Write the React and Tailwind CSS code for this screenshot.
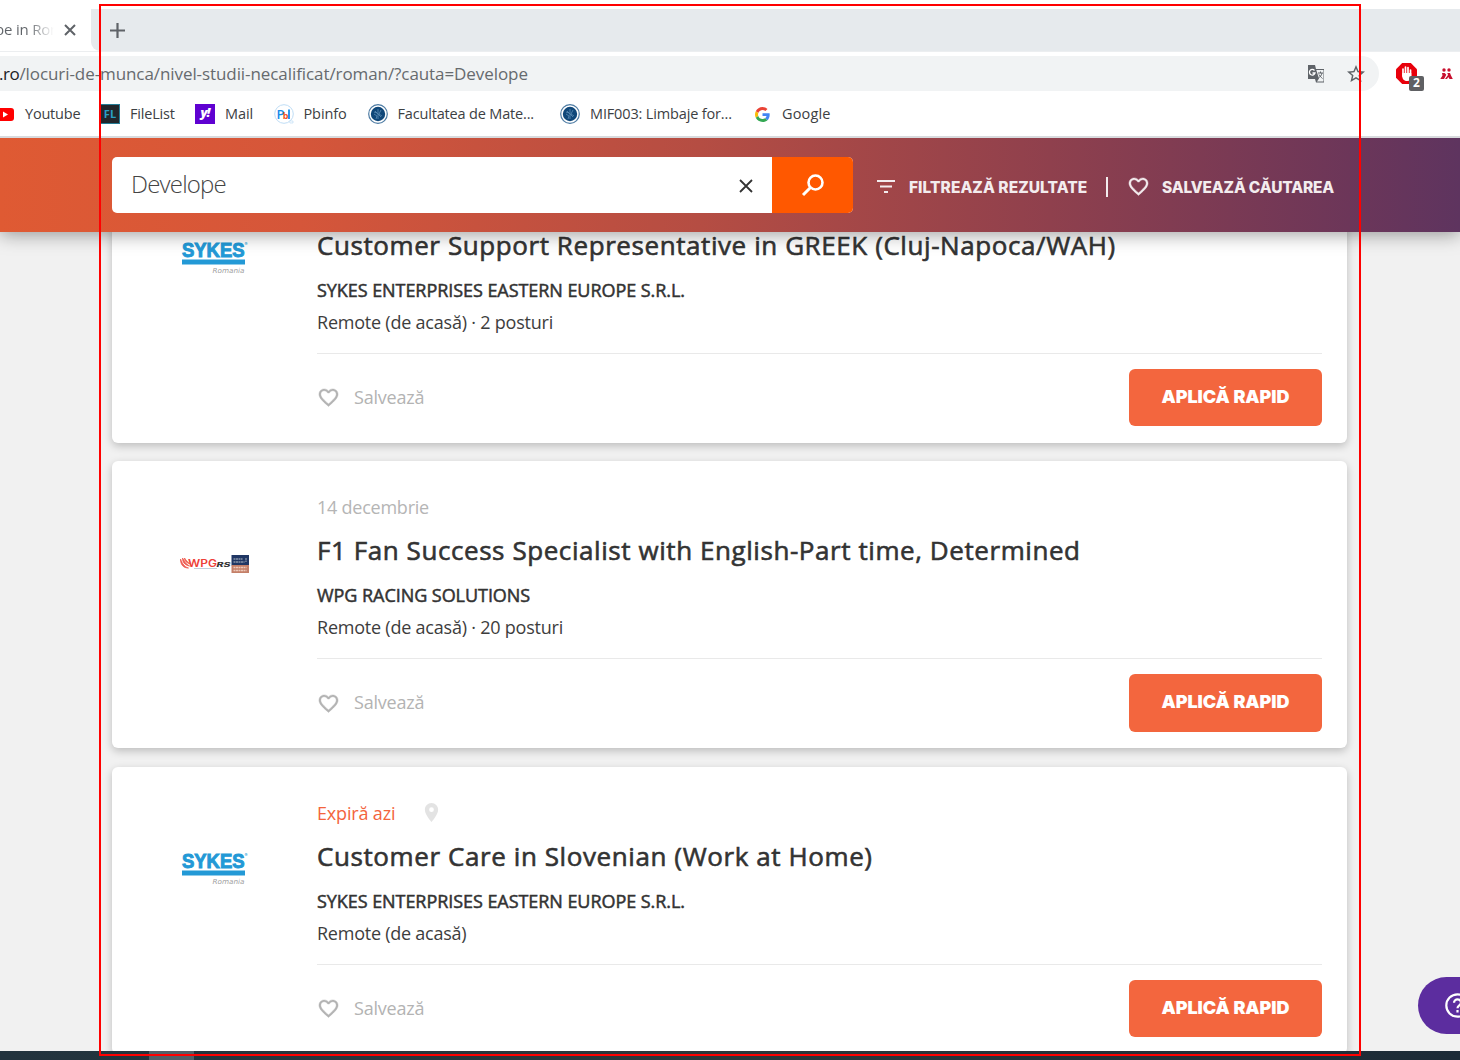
import React from "react";

function Heart({ className }) {
  return (
    <svg className={className} viewBox="0 0 24 24" fill="currentColor" stroke="currentColor" strokeWidth="0.4">
      <path d="M16.5 3c-1.74 0-3.41.81-4.5 2.09C10.91 3.81 9.24 3 7.5 3 4.42 3 2 5.42 2 8.5c0 3.78 3.4 6.86 8.55 11.54L12 21.35l1.45-1.32C18.6 15.36 22 12.28 22 8.5 22 5.42 19.58 3 16.5 3zm-4.4 15.55l-.1.1-.1-.1C7.14 14.24 4 11.39 4 8.5 4 6.5 5.5 5 7.5 5c1.54 0 3.04.99 3.57 2.36h1.87C13.46 5.99 14.96 5 16.5 5c2 0 3.5 1.5 3.5 3.5 0 2.89-3.14 5.74-7.9 10.05z" />
    </svg>
  );
}

function SykesLogo() {
  return (
    <svg className="overflow-visible" width="70" height="36" viewBox="0 0 70 36">
      <text x="2" y="17" fontFamily="Liberation Sans, sans-serif" fontWeight="700" fontSize="20" textLength="62.500" lengthAdjust="spacingAndGlyphs" fill="#2399d6" stroke="#2399d6" strokeWidth="1">SYKES</text>
      <text x="64.500" y="6" fontFamily="Inter, sans-serif" fontSize="4.500" fill="#2399d6">®</text>
      <rect x="2" y="19.500" width="63" height="5" fill="#2399d6" />
      <text x="32.500" y="32.500" fontFamily="DejaVu Sans, sans-serif" fontStyle="italic" fontSize="7" textLength="32" lengthAdjust="spacingAndGlyphs" fill="#a0a0a0">Romania</text>
    </svg>
  );
}

function WpgLogo() {
  return (
    <svg width="70" height="20" viewBox="0 0 70 20">
      <path d="M0.500 5c0 6 3 9 8 9-4-1-6-4-8-9zM2.500 4c0 4 2 7 7 8-4-2-5-5-7-8zM4.500 4c0 3 2 5 6 6-3-2-4-3-6-6z" fill="#ee5a4f" stroke="#ee5a4f" strokeWidth="0.8" />
      <text x="8" y="12.800" fontFamily="Inter, sans-serif" fontWeight="600" fontSize="10" textLength="29" lengthAdjust="spacingAndGlyphs" fill="#ee3f38">WPG</text>
      <text x="36.500" y="13" fontFamily="Inter, sans-serif" fontWeight="800" fontStyle="italic" fontSize="6" textLength="14" lengthAdjust="spacingAndGlyphs" fill="#333">RS</text>
      <rect x="14" y="14" width="23" height="1" fill="#c3d0da" />
      <rect x="51.500" y="1" width="17.500" height="10.500" fill="#203764" />
      <rect x="51.500" y="11" width="17.500" height="8" fill="#c47f68" />
      <path d="M53.500 5h9M53.500 8h11M66 4v4" stroke="#8794a8" strokeWidth="1.300" strokeDasharray="2 .5" />
      <path d="M53.500 13.500h13M53.500 16.500h13" stroke="#edc9b9" strokeWidth="1.300" strokeDasharray="2 .5" />
    </svg>
  );
}

function Seal() {
  return (
    <svg className="size-5" viewBox="0 0 20 20">
      <circle cx="10" cy="10" r="9.300" fill="#fff" stroke="#4d7ba3" strokeWidth="1.200" />
      <circle cx="10" cy="10" r="7.200" fill="#0f4779" />
      <path d="M10 5v10M7 7l6 6M13 6l-2 4 3 2M6 10l3 2-1 3M6 8l3 1" stroke="#5c8db5" strokeWidth=".8" fill="none" />
    </svg>
  );
}

function Bookmark({ icon, label, className, textClass }) {
  return (
    <div className={"flex shrink-0 items-center " + className}>
      {icon}
      <span className={"whitespace-nowrap text-[14.5px] leading-5 text-[#3c4043] " + textClass}>{label}</span>
    </div>
  );
}

function Job({ h, logo, date, expires, title, titleClass, company, companyClass, place, placeClass, buttonH, logoPad }) {
  return (
    <article className={"flex shrink-0 rounded-[6px] bg-white pr-[25px] shadow-[0_3px_8px_rgba(0,0,0,0.22)] " + h}>
      <div className={"flex w-[205px] shrink-0 justify-center " + logoPad}>
        <div>{logo}</div>
      </div>
      <div className="flex min-w-0 flex-1 flex-col whitespace-nowrap text-[#333]">
        <div className="mt-[34px] flex h-6 items-center">
          {expires ? (
            <>
              <span className="text-[18px] leading-6 tracking-[-0.17px] text-[#f3643c]">Expiră azi</span>
              <svg className="mb-[2px] ml-[29px] h-[19px] w-[15px]" viewBox="5 2 14 20" fill="#e3e3e3">
                <path d="M12 2C8.130 2 5 5.130 5 9c0 5.250 7 13 7 13s7-7.750 7-13c0-3.870-3.130-7-7-7zm0 9.500a2.500 2.500 0 1 1 0-5 2.500 2.500 0 0 1 0 5z" />
              </svg>
            </>
          ) : (
            <span className="text-[18px] leading-6 tracking-[-0.24px] text-[#b5b5b5]">{date}</span>
          )}
        </div>
        <h2 className={"mt-[15px] text-[26px] leading-8 [-webkit-text-stroke:0.6px_#333] " + titleClass}>{title}</h2>
        <div className={"mt-[17px] text-[18px] leading-6 [-webkit-text-stroke:0.5px_#333] " + companyClass}>{company}</div>
        <div className={"mt-2 text-[18px] leading-6 text-[#3d3d3d] " + placeClass}>{place}</div>
        <div className="mt-[19px] h-px bg-[#e9e9e9]" />
        <div className="mt-[15px] flex items-center justify-between">
          <div className="flex items-center text-[#b3b3b3]">
            <Heart className="size-[23px]" />
            <span className="mb-[2px] ml-[14px] text-[18px] leading-6 tracking-[-0.2px]">Salvează</span>
          </div>
          <button className={"flex w-[193px] items-center justify-center rounded-[6px] bg-[#f3663e] pb-[3px] font-[Inter,sans-serif] text-[18px] font-black tracking-[-0.05px] text-white " + buttonH}>
            APLICĂ RAPID
          </button>
        </div>
      </div>
    </article>
  );
}

export default function App() {
  return (
    <div className="relative flex h-[1060px] w-[1460px] flex-col overflow-hidden bg-[#f1f1f1] font-['Open_Sans','Noto_Sans',sans-serif]">
      <div className="flex h-[51px] shrink-0 bg-white pt-[9px]">
        <div className="relative z-10 flex w-[91px] shrink-0 items-center rounded-tr-[8px] bg-white">
          <span className="-ml-[5px] w-[60px] overflow-hidden whitespace-nowrap bg-linear-to-r from-[#5f6368] from-55% to-transparent to-98% bg-clip-text pb-[2px] text-[15px] leading-5 tracking-[-0.2px] text-transparent">pe in Rom</span>
          <svg className="ml-[9px] size-3" viewBox="0 0 12 12" stroke="#5f6368" strokeWidth="2"><path d="M1 1l10 10M11 1L1 11" /></svg>
        </div>
        <div className="flex flex-1 items-center rounded-bl-[9px] bg-[#e6eaed]">
          <svg className="ml-[19px] size-[15px]" viewBox="0 0 15 15" stroke="#5f6368" strokeWidth="2.200"><path d="M7.500 0v15M0 7.500h15" /></svg>
        </div>
      </div>
      <div className="flex h-[45px] shrink-0 items-center border-t border-[#eceef0] bg-white pb-px">
        <div className="flex h-[35px] w-[1379px] shrink-0 items-center rounded-r-full bg-[#f1f3f4]">
          <span className="-ml-[1px] w-[1308px] whitespace-nowrap text-[17px] leading-6 tracking-[-0.08px] text-[#666a6e]"><span className="tracking-[-0.4px] text-[#202124]">.ro</span>/locuri-de-munca/nivel-studii-necalificat/roman/?cauta=Develope</span>
          <svg className="size-[18px]" viewBox="0 0 18 18">
            <path d="M1 0h7l1 4h8v13.500H9L8 14H1z" fill="#5f6368" />
            <path d="M9.300 5h7.200v11.500H10l2-3-1-3z" fill="#f1f3f4" />
            <path d="M7.500 5.500A2.800 2.800 0 1 0 8 8H5.500" stroke="#fff" strokeWidth="1.300" fill="none" />
            <path d="M11 8h5M13.500 6.500V8M15 8c-.5 2.500-2 4-3.500 5M12 9.500c1 2 2.500 3 3.500 4" stroke="#5f6368" fill="none" />
          </svg>
          <svg className="ml-[22px] size-[18px]" viewBox="2 2 20 20" fill="#5f6368"><path d="M22 9.240l-7.190-.62L12 2 9.190 8.630 2 9.240l5.460 4.730L5.820 21 12 17.270 18.180 21l-1.630-7.030L22 9.240zM12 15.400l-3.760 2.270 1-4.280-3.320-2.880 4.380-.38L12 6.100l1.710 4.040 4.380.38-3.320 2.880 1 4.280L12 15.400z" /></svg>
        </div>
        <div className="relative ml-[17px] size-[22px]">
          <svg className="size-[21px]" viewBox="0 0 21 21">
            <path d="M6.200 0h8.600L21 6.200v8.600L14.800 21H6.200L0 14.800V6.200z" fill="#e8000b" />
            <path d="M7 6v7M9.500 4v8M12 4.500V12M14.500 7v6" stroke="#fff" strokeWidth="1.700" strokeLinecap="round" />
            <path d="M6.200 10h9.100v4c0 3-1.500 4-4 4-3 0-5.100-2-5.100-5z" fill="#fff" />
          </svg>
          <span className="absolute left-[13px] top-[13px] flex h-[15px] w-[15px] items-center justify-center rounded-[2px] bg-[#5f6063] text-[12px] font-bold leading-3 text-white">2</span>
        </div>
        <svg className="ml-[22px] h-3 w-[13px]" viewBox="0 0 13 12" fill="#c8102e">
          <circle cx="4" cy="2" r="1.700" /><circle cx="9" cy="2" r="1.700" />
          <path d="M2 5h2.700l1.600 1.800L4 11H.3l2.200-3.500zM7.300 5H10l1 2.500L12.800 11H9.500L8.300 9 7 11H5L8 7z" />
        </svg>
      </div>
      <div className="relative z-20 flex h-[42px] shrink-0 items-start border-b-2 border-[#d8dadd] bg-white pt-2">
        <Bookmark className="w-[100px]" textClass="ml-[11px] tracking-[-0.2px]" label="Youtube" icon={<svg className="h-[13px] w-[14px]" viewBox="0 0 14 13"><rect x="-5" width="19" height="13" rx="3" fill="#f00" /><path d="M3 3.500v6l5-3z" fill="#fff" /></svg>} />
        <Bookmark className="w-[95px]" textClass="ml-[10px] tracking-[-0.2px]" label="FileList" icon={<span className="flex size-5 items-center justify-center border border-[#257b94] bg-[#22262b] text-[11px] font-bold text-[#2a9fc4]">FL</span>} />
        <Bookmark className="w-[79px]" textClass="ml-[10px] tracking-[-0.1px]" label="Mail" icon={<span className="flex size-5 items-center justify-center bg-[#5f01d1] pb-[2px] text-[13px] font-extrabold italic tracking-[-1px] text-white">y!</span>} />
        <Bookmark className="w-[94px]" textClass="ml-[9.5px] tracking-[-0.1px]" label="Pbinfo" icon={<svg className="size-5" viewBox="0 0 20 20"><circle cx="10" cy="10" r="9.300" fill="#fff" stroke="#bfddf5" /><path d="M15 17h4v2h-3z" fill="#fff" stroke="#bfddf5" strokeWidth=".7" /><text x="2.500" y="15" fontFamily="Open Sans, sans-serif" fontSize="13" fontWeight="600" fill="#168bea">P</text><text x="8.800" y="15" fontFamily="Open Sans, sans-serif" fontSize="9" fontWeight="700" fill="#f4511e">b</text><path d="M15 5.500V15" stroke="#168bea" strokeWidth="1.800" /></svg>} />
        <Bookmark className="w-[192px]" textClass="ml-[9.500px] tracking-[-0.17px]" label="Facultatea de Mate..." icon={<Seal />} />
        <Bookmark className="w-[195px]" textClass="ml-[10px] tracking-[-0.15px]" label="MIF003: Limbaje for..." icon={<Seal />} />
        <Bookmark textClass="ml-[12px] tracking-[0.15px]" label="Google" icon={<svg className="size-[15px]" viewBox="0 0 48 48"><path fill="#EA4335" d="M24 9.500c3.540 0 6.710 1.220 9.210 3.600l6.850-6.850C35.900 2.380 30.470 0 24 0 14.620 0 6.510 5.380 2.560 13.220l7.980 6.190C12.430 13.720 17.740 9.500 24 9.500z" /><path fill="#4285F4" d="M46.980 24.550c0-1.570-.15-3.090-.38-4.550H24v9.020h12.940c-.58 2.960-2.260 5.480-4.780 7.180l7.730 6c4.510-4.180 7.090-10.360 7.090-17.650z" /><path fill="#FBBC05" d="M10.530 28.590c-.48-1.450-.76-2.990-.76-4.590s.27-3.140.76-4.590l-7.980-6.190C.92 16.460 0 20.120 0 24c0 3.880.92 7.540 2.560 10.780l7.970-6.190z" /><path fill="#34A853" d="M24 48c6.480 0 11.930-2.130 15.890-5.810l-7.730-6c-2.150 1.450-4.920 2.300-8.160 2.300-6.260 0-11.570-4.220-13.470-9.910l-7.980 6.190C6.510 42.620 14.620 48 24 48z" /></svg>} />
      </div>
      <header className="relative z-10 flex h-[94px] shrink-0 items-center bg-[linear-gradient(90deg,#df5a33_0px,#d5563a_300px,#b54d43_700px,#8f404d_1050px,#6c3659_1350px,#5e345f_1460px)] pl-28 shadow-[0_2px_18px_rgba(0,0,0,0.4)]">
        <div className="flex h-14 w-[741px] shrink-0 overflow-hidden rounded-[5px] bg-white">
          <div className="flex flex-1 items-center justify-between pl-[19px] pr-[19px]">
            <span className="mb-[2px] text-[24px] font-light leading-8 tracking-[-0.8px] text-[#444]">Develope</span>
            <svg className="mt-px size-[14px]" viewBox="0 0 14 14" stroke="#333" strokeWidth="1.800"><path d="M1 1l12 12M13 1L1 13" /></svg>
          </div>
          <div className="flex w-[81px] items-center justify-center bg-[#ff5800]">
            <svg className="size-6" viewBox="0 0 24 24" fill="none" stroke="#fff" strokeWidth="2.600"><circle cx="14.500" cy="9.500" r="7" /><path d="M9.500 14.500L2 22" strokeWidth="3" /></svg>
          </div>
        </div>
        <div className="mt-1 flex items-center whitespace-nowrap font-[Inter,sans-serif] text-[15.5px] font-extrabold text-[#f3ecee]">
          <svg className="mb-[2px] ml-6 h-[13px] w-[18px]" viewBox="0 0 18 13" fill="currentColor"><path d="M0 0h18v2H0zM3 5.500h12v2H3zM7 11h4v2H7z" /></svg>
          <span className="ml-[14px] mt-[2px] w-[178px] tracking-[0.05px]">FILTREAZĂ REZULTATE</span>
          <span className="ml-[19px] h-5 w-[2px] bg-[#f3ecee]" />
          <Heart className="mb-[2px] ml-[19px] size-[23px]" />
          <span className="ml-3 mt-[2px] tracking-[-0.18px]">SALVEAZĂ CĂUTAREA</span>
        </div>
      </header>
      <main className="flex h-[819px] shrink-0 flex-col overflow-hidden px-28">
        <div className="-mt-[76px] flex w-[1235px] flex-col">
          <Job h="h-[287px]" logo={<SykesLogo />} logoPad="pt-[84px]" date="14 decembrie" title="Customer Support Representative in GREEK (Cluj-Napoca/WAH)" titleClass="tracking-[0.58px]" company="SYKES ENTERPRISES EASTERN EUROPE S.R.L." companyClass="tracking-[-0.06px]" place="Remote (de acasă) · 2 posturi" placeClass="tracking-[-0.22px]" buttonH="h-[57px]" />
          <div className="h-[18px]" />
          <Job h="h-[287px]" logo={<WpgLogo />} logoPad="pt-[93px]" date="14 decembrie" title="F1 Fan Success Specialist with English-Part time, Determined" titleClass="tracking-[0.57px]" company="WPG RACING SOLUTIONS" companyClass="tracking-[-0.05px]" place="Remote (de acasă) · 20 posturi" placeClass="tracking-[-0.22px]" buttonH="h-[58px]" />
          <div className="h-[19px]" />
          <Job h="h-[287px]" logo={<SykesLogo />} logoPad="pt-[84px]" expires title="Customer Care in Slovenian (Work at Home)" titleClass="tracking-[0.59px]" company="SYKES ENTERPRISES EASTERN EUROPE S.R.L." companyClass="tracking-[-0.06px]" place="Remote (de acasă)" placeClass="tracking-[-0.25px]" buttonH="h-[57px]" />
        </div>
      </main>
      <footer className="flex h-[9px] shrink-0 bg-linear-to-r from-[#22333e] via-[#2c373a] to-[#1c2b37]">
        <div className="ml-[149px] w-[45px] bg-[#535f67]" />
      </footer>
      <div className="absolute left-[1418px] top-[977px] flex h-[57px] w-[90px] items-center rounded-full bg-[#5c2d9f] pl-[27px]">
        <svg className="size-[25px]" viewBox="0 0 25 25" fill="none" stroke="#fff" strokeWidth="2.200"><circle cx="12.500" cy="12.500" r="11.200" /><path d="M9 9.800c0-4.500 7-4.500 7 0 0 2.600-3.500 2.700-3.500 5.500M12.500 17v2.600" /></svg>
      </div>
      <div className="pointer-events-none absolute left-[99px] top-[4px] z-20 h-[1052px] w-[1262px] border-2 border-[#f00]" />
    </div>
  );
}
